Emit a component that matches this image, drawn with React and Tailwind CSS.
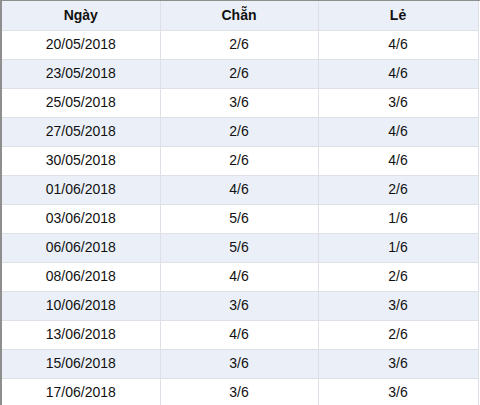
// Bảng thống kê chẵn / lẻ theo ngày

import React from 'react'

const rows = [
  ['20/05/2018', '2/6', '4/6'],
  ['23/05/2018', '2/6', '4/6'],
  ['25/05/2018', '3/6', '3/6'],
  ['27/05/2018', '2/6', '4/6'],
  ['30/05/2018', '2/6', '4/6'],
  ['01/06/2018', '4/6', '2/6'],
  ['03/06/2018', '5/6', '1/6'],
  ['06/06/2018', '5/6', '1/6'],
  ['08/06/2018', '4/6', '2/6'],
  ['10/06/2018', '3/6', '3/6'],
  ['13/06/2018', '4/6', '2/6'],
  ['15/06/2018', '3/6', '3/6'],
  ['17/06/2018', '3/6', '3/6'],
]

export default function App() {
  return (
    <div className="w-[480px] h-[405px] overflow-hidden bg-white border-l-2 border-t border-[#8e8e8e] font-['Liberation_Sans',Arial,sans-serif] text-[14px] text-[#111]">
      <table className="w-[476px] border-collapse table-fixed">
        <thead>
          <tr className="h-[29px] bg-[#ebf0f8]">
            <th className="w-[158px] border-r border-b border-[#dde1e7] font-bold text-center p-0">Ngày</th>
            <th className="w-[158px] border-r border-b border-[#dde1e7] font-bold text-center p-0">Chẵn</th>
            <th className="w-[160px] border-r border-b border-[#dde1e7] font-bold text-center p-0">Lẻ</th>
          </tr>
        </thead>
        <tbody>
          {rows.map((r, i) => (
            <tr key={r[0]} className={`h-[29px] ${i % 2 === 1 ? 'bg-[#ebf0f8]' : 'bg-white'}`}>
              <td className="border-r border-b border-[#dde1e7] text-center p-0">{r[0]}</td>
              <td className="border-r border-b border-[#dde1e7] text-center p-0">{r[1]}</td>
              <td className="border-r border-b border-[#dde1e7] text-center p-0">{r[2]}</td>
            </tr>
          ))}
        </tbody>
      </table>
    </div>
  )
}
